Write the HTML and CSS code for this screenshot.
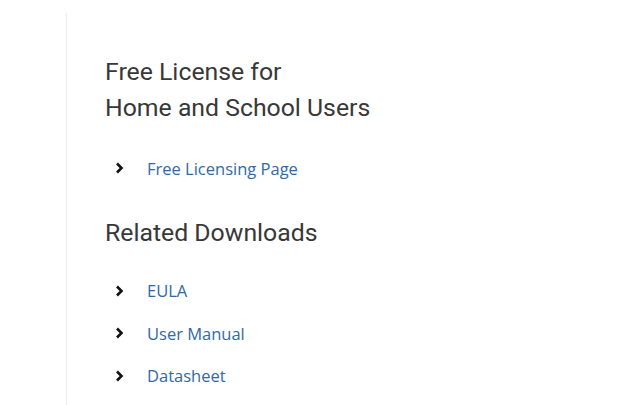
FILE: index.html
```html
<!DOCTYPE html>
<html>
<head>
<meta charset="utf-8">
<link rel="stylesheet" href="styles.css">
</head>
<body>
<aside class="sidebar">
  <h2 class="title">Free License for<br>Home and School Users</h2>
  <ul class="links">
    <li><span class="chev"><svg width="9" height="12" viewBox="0 0 9 12"><path d="M2 1.5 L6.5 6 L2 10.5" fill="none" stroke="#111" stroke-width="2.6"/></svg></span><a href="#">Free Licensing Page</a></li>
  </ul>
  <h2 class="title title-sub">Related Downloads</h2>
  <ul class="links">
    <li><span class="chev"><svg width="9" height="12" viewBox="0 0 9 12"><path d="M2 1.5 L6.5 6 L2 10.5" fill="none" stroke="#111" stroke-width="2.6"/></svg></span><a href="#">EULA</a></li>
    <li><span class="chev"><svg width="9" height="12" viewBox="0 0 9 12"><path d="M2 1.5 L6.5 6 L2 10.5" fill="none" stroke="#111" stroke-width="2.6"/></svg></span><a href="#">User Manual</a></li>
    <li><span class="chev"><svg width="9" height="12" viewBox="0 0 9 12"><path d="M2 1.5 L6.5 6 L2 10.5" fill="none" stroke="#111" stroke-width="2.6"/></svg></span><a href="#">Datasheet</a></li>
  </ul>
</aside>
</body>
</html>
```
FILE: styles.css
```css
html, body { margin: 0; padding: 0; background: #fff; }
body { padding: 13px 0 0 66px; height: 405px; box-sizing: border-box; overflow: hidden; }
.sidebar {
  border-left: 1px solid #ececec;
  padding: 41px 0 0 38px;
  height: 100%;
  box-sizing: border-box;
}
.title {
  margin: 0 0 21px;
  font-family: Roboto, sans-serif;
  font-weight: 400;
  font-size: 24.8px;
  line-height: 36px;
  color: #383838;
}
.title-sub { margin-bottom: 19px; }
.links {
  list-style: none;
  margin: 0 0 25px;
  padding: 0;
}
.links li {
  display: flex;
  align-items: center;
  height: 42.5px;
  padding-left: 10px;
}
.chev { width: 32px; display: flex; align-items: center; }
.links a {
  font-family: "Open Sans", sans-serif;
  font-size: 16.5px;
  color: #2f69a8;
  text-decoration: none;
}
```
